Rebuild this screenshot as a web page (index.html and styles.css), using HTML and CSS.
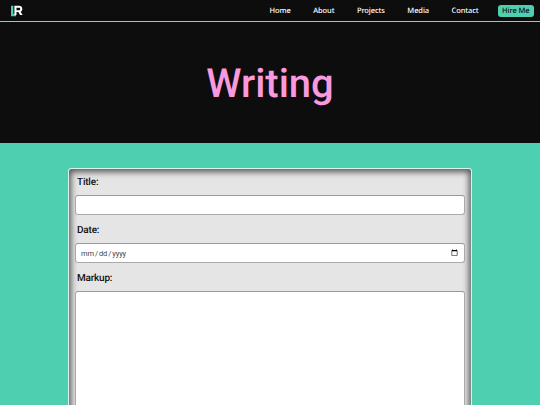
FILE: index.html
```html
<!DOCTYPE html>
<html lang="en">
<head>
<meta charset="utf-8">
<title>Writing</title>
<link rel="stylesheet" href="styles.css">
</head>
<body>
<header class="nav">
  <a class="logo" href="#" aria-label="LR">
    <svg width="12" height="12" viewBox="0 0 12 12"><path class="logo-l" d="M0 .8h2.400v8.200H5v2.200H0z"/><path class="logo-r" d="M3.400 .8h4.500c2 0 3.400 1.200 3.400 3.100 0 1.400-.7 2.400-1.800 2.900l2.200 3.200H9.100L7.300 7.100H5.500v2.900H3.400zM5.500 2.700v2.600h2.300c.9 0 1.400-.5 1.400-1.300s-.5-1.300-1.400-1.300z"/></svg>
  </a>
  <nav class="links">
    <a href="#">Home</a>
    <a href="#">About</a>
    <a href="#">Projects</a>
    <a href="#">Media</a>
    <a href="#">Contact</a>
    <a href="#" class="hire">Hire Me</a>
  </nav>
</header>
<section class="hero"><h1>Writing</h1></section>
<main class="main">
  <form class="card">
    <label class="lbl" for="t">Title:</label>
    <input class="field" id="t" type="text">
    <label class="lbl" for="d">Date:</label>
    <input class="field" id="d" type="date">
    <label class="lbl" for="m">Markup:</label>
    <textarea class="field area" id="m"></textarea>
  </form>
</main>
</body>
</html>
```
FILE: styles.css
```css
* { box-sizing: border-box; }
html, body { margin: 0; padding: 0; }
body { font-family: Roboto, sans-serif; background: #4ecfb0; overflow: hidden; height: 405px; text-rendering: geometricPrecision; }
.nav { height: 22px; background: #0d0d0d; border-bottom: 1px solid #7fd6bc; display: flex; align-items: center; justify-content: space-between; padding: 0 6px 0 11px; }
.logo { display: flex; }
.logo-l { fill: #4ecfb0; }
.logo-r { fill: #fff; }
.links { display: flex; align-items: center; gap: 22.500px; font-family: "Noto Sans", sans-serif; opacity: .999; }
.links a { color: #fff; text-decoration: none; font-size: 7.500px; font-weight: 500; line-height: 12px; letter-spacing: -.1px; }
.links a.hire { background: #4ecfb0; color: #0d0d0d; padding: 0 4.500px; border-radius: 3px; margin-left: -3.500px; }
.hero { height: 121px; padding-top: 3px; background: #0d0d0d; display: flex; align-items: center; justify-content: center; }
.hero h1 { margin: 0; color: #f99ade; font-size: 40px; font-weight: 500; line-height: 1; opacity: .999; }
.main { padding-top: 25px; display: flex; justify-content: center; }
.card { width: 404px; height: 400px; background: #e5e5e5; border: 1px solid #d8f5ec; border-radius: 3px; box-shadow: inset 0 1px 6px 2px #555; padding: 7px 6px 6px; display: flex; flex-direction: column; }
.lbl { font-size: 10px; font-weight: 500; letter-spacing: -.2px; color: #111; margin: 0 0 6px 2px; line-height: 13px; opacity: .999; }
.field { width: 100%; height: 20px; background: #fff; border: 1px solid #aaa; border-top-color: #999; border-radius: 3px; font: 7.500px Roboto, sans-serif; letter-spacing: -.1px; padding: 0 4px; margin-bottom: 9px; color: #444; flex: none; }
.area { height: 300px; resize: none; }
```
